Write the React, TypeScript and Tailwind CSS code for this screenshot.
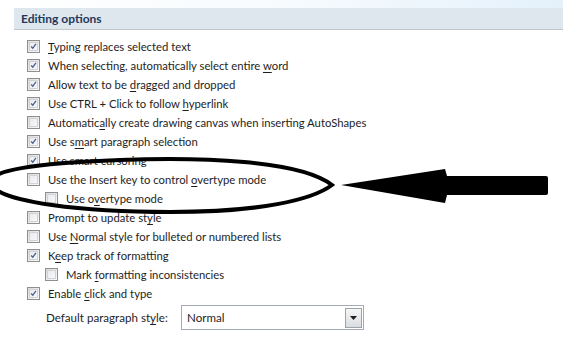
import type { ReactNode } from 'react'

type Row = { label: ReactNode; checked: boolean; indent?: boolean }

function U({ children }: { children: ReactNode }) {
  return <span className="underline underline-offset-2">{children}</span>
}

function Box({ checked }: { checked: boolean }) {
  return (
    <span className="flex h-[13px] w-[13px] shrink-0 items-center justify-center border border-[#8e8f8f] bg-gradient-to-br from-[#dcdcdc] to-[#fbfbfb]">
      <span className="flex h-[9px] w-[9px] items-center justify-center border border-[#cfd2d6] bg-gradient-to-br from-[#e9ebee] to-[#f7f8f9]">
        {checked && (
          <svg width="9" height="9" viewBox="0 0 9 9">
            <path d="M1.5 4.5 L3.6 6.8 L7.6 1.2" fill="none" stroke="#4a5d8f" strokeWidth="1.7" />
          </svg>
        )}
      </span>
    </span>
  )
}

const rows: Row[] = [
  { label: <><U>T</U>yping replaces selected text</>, checked: true },
  { label: <>When selecting, automatically select entire <U>w</U>ord</>, checked: true },
  { label: <>Allow text to be <U>d</U>ragged and dropped</>, checked: true },
  { label: <>Use CTRL + Click to follow <U>h</U>yperlink</>, checked: true },
  { label: <>Automatic<U>a</U>lly create drawing canvas when inserting AutoShapes</>, checked: false },
  { label: <>Use s<U>m</U>art paragraph selection</>, checked: true },
  { label: <>Use smart cursoring</>, checked: true },
  { label: <>Use the Insert key to control <U>o</U>vertype mode</>, checked: false },
  { label: <>Use o<U>v</U>ertype mode</>, checked: false, indent: true },
  { label: <>Prompt to update st<U>y</U>le</>, checked: false },
  { label: <>Use <U>N</U>ormal style for bulleted or numbered lists</>, checked: false },
  { label: <>K<U>e</U>ep track of formatting</>, checked: true },
  { label: <>Mark <U>f</U>ormatting inconsistencies</>, checked: false, indent: true },
  { label: <>Enable <U>c</U>lick and type</>, checked: true },
]

export default function App() {
  return (
    <div
      className="relative h-[343px] w-[563px] overflow-hidden bg-white text-[11.3px] text-[#1e1e1e]"
      style={{ fontFamily: 'Lato, "Noto Sans", sans-serif' }}
    >
      <div className="h-[8px] bg-gradient-to-r from-white via-[#f7fbfe] to-[#e4f1fb]" />
      <div className="ml-[14px] flex h-[22px] items-center border-b border-[#c3c7cc] bg-[#dee6ee] pl-[7px] text-[12px] font-bold text-[#1e395b]">
        Editing options
      </div>

      <div className="mt-[7px] flex flex-col">
        {rows.map((r, i) => (
          <div
            key={i}
            className={`flex h-[19px] items-center gap-[8px] ${r.indent ? 'pl-[45px]' : 'pl-[27px]'}`}
          >
            <Box checked={r.checked} />
            <span className="whitespace-nowrap leading-none">{r.label}</span>
          </div>
        ))}
        <div className="mt-[2px] flex h-[25px] items-center pl-[46px]">
          <span className="w-[135px] whitespace-nowrap text-[11.6px]">
            Default paragraph st<U>y</U>le:
          </span>
          <div className="flex h-[25px] w-[183px] items-center border border-[#a5acb5] bg-white pl-[5px] pr-[1px]">
            <span className="flex-1 text-[11.6px]">Normal</span>
            <span className="flex h-[20px] w-[17px] items-center justify-center border border-[#9ba3ad] bg-gradient-to-b from-[#f6f6f6] to-[#dadde0]">
              <svg width="7" height="4" viewBox="0 0 7 4">
                <path d="M0 0 H7 L3.5 4 Z" fill="#1e1e1e" />
              </svg>
            </span>
          </div>
        </div>
      </div>

      <svg className="pointer-events-none absolute left-0 top-0" width="563" height="343" viewBox="0 0 563 343">
        <path
          d="M332 185 C 300 160, 200 157, 120 160 C 40 163, -20 170, -8 186 C 5 202, 80 212, 170 212 C 260 212, 312 200, 332 185 Z"
          fill="none"
          stroke="#000"
          strokeWidth="4"
        />
        <path
          d="M341 185 L445 169 L447 176 L546 176 Q548 176 548 178 L548 193 Q548 195 546 195 L447 195 L445 203 Z"
          fill="#000"
        />
      </svg>
    </div>
  )
}
